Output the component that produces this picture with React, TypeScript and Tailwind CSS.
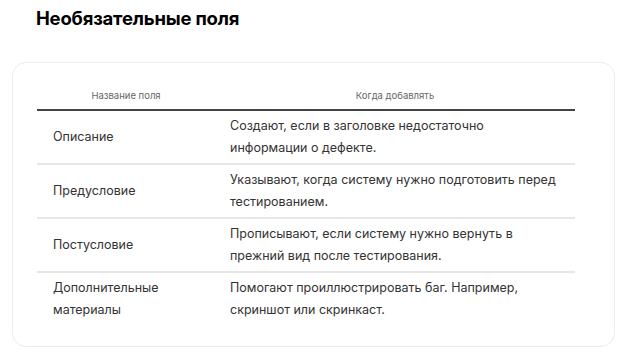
const ROWS = [
  { name: "Описание", when: "Создают, если в заголовке недостаточно информации о дефекте." },
  { name: "Предусловие", when: "Указывают, когда систему нужно подготовить перед тестированием." },
  { name: "Постусловие", when: "Прописывают, если систему нужно вернуть в прежний вид после тестирования." },
  { name: "Дополнительные материалы", when: "Помогают проиллюстрировать баг. Например, скриншот или скринкаст." },
];

export default function App() {
  return (
    <div className="w-[623px] h-[356px] bg-white font-['Inter',sans-serif] text-[#222] overflow-hidden">
      <h2 className="pl-[36px] pt-[5px] text-[18.5px] leading-[26px] font-bold text-black tracking-[-0.2px]">
        Необязательные поля
      </h2>
      <div className="ml-[12px] mt-[31px] w-[603px] h-[285px] rounded-[14px] border border-[#ececec] px-[24px] pt-[26px]">
        <table className="w-[538px] border-collapse">
          <thead>
            <tr className="border-b-2 border-[#444]">
              <th className="w-[178px] pb-[6px] text-center text-[9.5px] leading-[14px] font-normal text-[#666]">
                Название поля
              </th>
              <th className="pb-[6px] text-center text-[9.5px] leading-[14px] font-normal text-[#666]">
                Когда добавлять
              </th>
            </tr>
          </thead>
          <tbody>
            {ROWS.map((row, i) => (
              <tr key={row.name} className={i < ROWS.length - 1 ? "border-b-2 border-[#e6e6e6]" : ""}>
                <td className="pl-[16px] pr-[20px] py-[3px] text-[12.5px] leading-[22px] text-[#333] align-middle">
                  {row.name}
                </td>
                <td className="pl-[15px] pr-[14px] py-[4px] text-[12.5px] leading-[22px] text-[#333]">
                  {row.when}
                </td>
              </tr>
            ))}
          </tbody>
        </table>
      </div>
    </div>
  );
}
